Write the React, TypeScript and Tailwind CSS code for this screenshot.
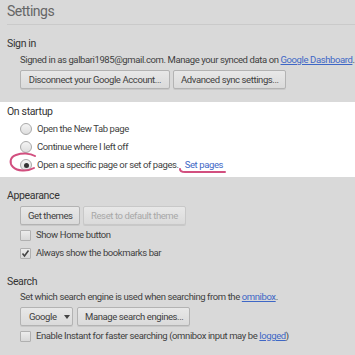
import React from "react";

const font = { fontFamily: 'Roboto, "Liberation Sans", Arial, sans-serif' };

function Btn({ children, disabled, className = "" }: { children: React.ReactNode; disabled?: boolean; className?: string }) {
	return (
		<button
			type="button"
			className={`h-[19px] px-[7px] rounded-[2px] border text-[9.5px] leading-none whitespace-nowrap bg-gradient-to-b from-[#e8e8e8] to-[#dadada] shadow-[0_1px_0_rgba(0,0,0,0.08)] ${
				disabled ? "border-[#c8c8c8] text-[#a8a8a8]" : "border-[#b3b3b3] text-[#404040]"
			} ${className}`}
		>
			{children}
		</button>
	);
}

function Radio({ checked }: { checked?: boolean }) {
	return (
		<span className="w-[12px] h-[12px] rounded-full border border-[#a9a9a9] bg-gradient-to-b from-[#f4f4f4] to-[#dedede] flex items-center justify-center shrink-0">
			{checked && <span className="w-[5px] h-[5px] rounded-full bg-[#333]" />}
		</span>
	);
}

function Check({ checked }: { checked?: boolean }) {
	return (
		<span className="w-[11px] h-[11px] rounded-[1px] border border-[#b0b0b0] bg-gradient-to-b from-[#ececec] to-[#d8d8d8] flex items-center justify-center shrink-0">
			{checked && (
				<svg width="9" height="9" viewBox="0 0 9 9">
					<path d="M1.5 4.5 L3.5 7 L7.5 1.5" stroke="#444" strokeWidth="1.6" fill="none" />
				</svg>
			)}
		</span>
	);
}

export default function App() {
	return (
		<div className="w-[355px] h-[355px] overflow-hidden bg-[#d9d9d9] text-[#3f3f3f] tracking-[-0.4px] relative" style={font}>
			<div className="pl-[7px] pt-[2px]">
				<h1 className="text-[14px] tracking-[-0.5px] text-[#666] leading-[18px]">Settings</h1>
				<div className="mt-[4px] border-t border-[#cacaca]" />
			</div>

			<section className="pt-[11px] pl-[7px]">
				<h2 className="text-[10.5px] tracking-[-0.35px] leading-[16px] text-[#333]">Sign in</h2>
				<div className="pl-[13px]">
					<p className="text-[9.5px] leading-[14px] whitespace-nowrap mt-[1px]">
						Signed in as galbari1985@gmail.com. Manage your synced data on{" "}
						<span className="text-[#3e67c6] underline">Google Dashboard</span>.
					</p>
					<div className="flex gap-[3px] mt-[3px]">
						<Btn className="w-[150px]">Disconnect your Google Account...</Btn>
						<Btn className="w-[113px]">Advanced sync settings...</Btn>
					</div>
				</div>
			</section>

			<section className="mt-[13px] bg-white pl-[7px] pt-[2px] h-[75px] relative">
				<h2 className="text-[10.5px] tracking-[-0.35px] leading-[16px] text-[#333]">On startup</h2>
				<div className="pl-[13px] flex flex-col text-[9.5px]">
					<label className="flex items-center gap-[5px] h-[18px]">
						<Radio />
						Open the New Tab page
					</label>
					<label className="flex items-center gap-[5px] h-[18px]">
						<Radio />
						Continue where I left off
					</label>
					<label className="flex items-center gap-[5px] h-[18px]">
						<Radio checked />
						Open a specific page or set of pages.
						<span className="ml-[1px] text-[#3e67c6]">Set pages</span>
					</label>
				</div>
				<svg className="absolute left-0 top-0 pointer-events-none" width="355" height="75" viewBox="0 0 355 75">
					<path
						d="M35 54 C30 51 22 51 16 53 C10 55 9 61 13 65 C17 69 27 70 34 66"
						stroke="#d24f7f"
						strokeWidth="2"
						fill="none"
						strokeLinecap="round"
					/>
					<path d="M180 67 C180 69 181 70 185 70 L225 70" stroke="#d24f7f" strokeWidth="2" fill="none" strokeLinecap="round" />
				</svg>
			</section>

			<section className="pt-[11px] pl-[7px]">
				<h2 className="text-[10.5px] tracking-[-0.35px] leading-[16px] text-[#333]">Appearance</h2>
				<div className="pl-[13px]">
					<div className="flex gap-[3px] mt-[2px]">
						<Btn className="w-[60px]">Get themes</Btn>
						<Btn disabled className="w-[103px]">Reset to default theme</Btn>
					</div>
					<div className="flex flex-col text-[9.5px] mt-[1px]">
						<label className="flex items-center gap-[5px] h-[18px]">
							<Check />
							Show Home button
						</label>
						<label className="flex items-center gap-[5px] h-[18px]">
							<Check checked />
							Always show the bookmarks bar
						</label>
					</div>
				</div>
			</section>

			<section className="pt-[12px] pl-[7px]">
				<h2 className="text-[10.5px] tracking-[-0.35px] leading-[16px] text-[#333]">Search</h2>
				<div className="pl-[13px]">
					<p className="text-[9.5px] leading-[14px] whitespace-nowrap">
						Set which search engine is used when searching from the{" "}
						<span className="text-[#3e67c6] underline">omnibox</span>.
					</p>
					<div className="flex gap-[4px] mt-[3px]">
						<Btn className="w-[53px] !px-0 pl-[8px] flex items-center justify-start">
							<span className="ml-[8px]">Google</span>
							<svg className="shrink-0 ml-[7px]" width="6" height="4" viewBox="0 0 6 4">
								<path d="M0 0 L6 0 L3 4 Z" fill="#444" />
							</svg>
						</Btn>
						<Btn className="w-[113px]">Manage search engines...</Btn>
					</div>
					<label className="flex items-center gap-[5px] h-[18px] text-[9.5px] mt-[1px] whitespace-nowrap">
						<Check />
						<span>
							Enable Instant for faster searching (omnibox input may be{" "}
							<span className="text-[#3e67c6] underline">logged</span>)
						</span>
					</label>
				</div>
			</section>
		</div>
	);
}
